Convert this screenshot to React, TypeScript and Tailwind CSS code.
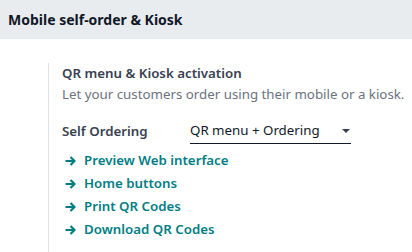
import React from "react";

const Arrow = () => (
  <svg width="11" height="10" viewBox="0 0 11 10" className="shrink-0">
    <path d="M0.5 5H9.5M5.5 1L9.5 5L5.5 9" stroke="#017e84" strokeWidth="2.2" fill="none" strokeLinecap="butt" strokeLinejoin="miter" />
  </svg>
);

export default function App() {
  const links = ["Preview Web interface", "Home buttons", "Print QR Codes", "Download QR Codes"];
  return (
    <div className="w-[412px] h-[252px] bg-white overflow-hidden" style={{ fontFamily: '"Noto Sans", sans-serif' }}>
      <div className="h-[39px] bg-[#e9ecef] flex items-center px-2">
        <span className="text-[14px] font-bold text-[#111827] leading-none">Mobile self-order &amp; Kiosk</span>
      </div>
      <div className="pt-[24px] pl-[48px]">
        <div className="border-l border-[#dee2e6] pl-[13px] pb-[20px] whitespace-nowrap">
          <div className="text-[13.3px] font-semibold text-[#374151] leading-[21px]">QR menu &amp; Kiosk activation</div>
          <div className="text-[13.3px] text-[#6b7280] leading-[21px]">Let your customers order using their mobile or a kiosk.</div>
          <div className="flex items-stretch h-[25px] mt-[14px]">
            <div className="w-[128px] flex items-center text-[13.3px] font-semibold text-[#374151]">Self Ordering</div>
            <div className="w-[161px] border-b border-[#111827] flex items-center justify-between pr-[1px]">
              <span className="text-[13.3px] text-[#111827]">QR menu + Ordering</span>
              <span className="w-0 h-0 border-l-[4px] border-r-[4px] border-t-[4px] border-l-transparent border-r-transparent border-t-[#374151]" />
            </div>
          </div>
          <div className="mt-[5px] flex flex-col">
            {links.map((l) => (
              <div key={l} className="flex items-center gap-[8px] pl-[3px] h-[23px]">
                <Arrow />
                <span className="text-[13.3px] font-semibold text-[#017e84] leading-none">{l}</span>
              </div>
            ))}
          </div>
        </div>
      </div>
    </div>
  );
}
